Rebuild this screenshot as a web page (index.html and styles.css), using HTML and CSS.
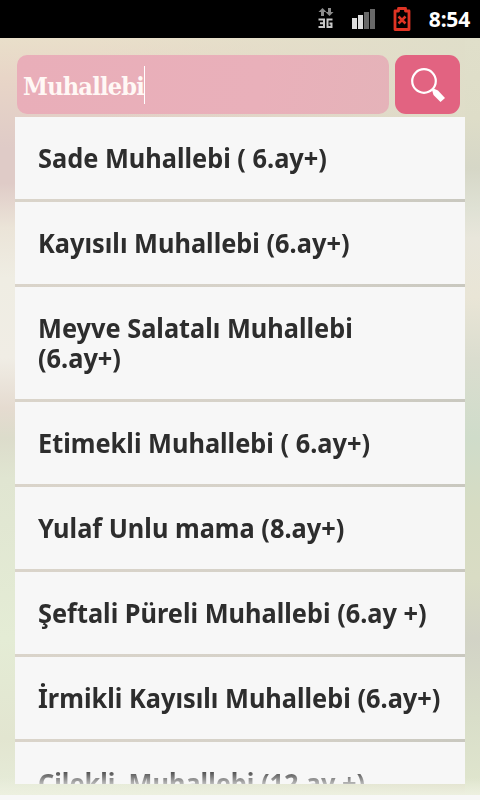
FILE: index.html
```html
<!DOCTYPE html>
<html lang="tr">
<head>
    <meta charset="UTF-8" />
    <title>Muhallebi</title>
    <link rel="stylesheet" href="styles.css">
</head>
<body>

<header class="statusbar">
    <svg class="network" width="16" height="22" viewBox="0 0 16 22">
        <path fill="#8c8c8c" d="M4.500 0l4 4H6v4H3V4H.5zM10 0h3v4h2.500l-4 4-4-4H10z" />
        <path fill="none" stroke="#c8c8c8" stroke-width="2" d="M.5 11.500H6V19H.5M2 15.200h4M14.500 11.500H9.500V19h4v-3.500h-2" />
    </svg>
    <svg class="signal" width="24" height="22" viewBox="0 0 24 22">
        <path fill="#dedede" d="M0 10h5v11H0zM6 7h5v14H6z" />
        <path fill="#686868" d="M12 4h5v17h-5zM18 1h5v20h-5z" />
    </svg>
    <svg class="battery" width="18" height="26" viewBox="0 0 18 26">
        <path fill="none" stroke="#df3424" stroke-width="2.800" stroke-linejoin="round" d="M2 5h3.500V2.500h7V5H16v18.500H2z" />
        <path stroke="#df3424" stroke-width="2.500" d="M5.500 10.500l7 7M12.500 10.500l-7 7" />
    </svg>
    <span class="clock">8:54</span>
</header>

<main class="page">
    <div class="search">
        <div class="search-field"><span class="search-text">Muhallebi</span><span class="caret"></span></div>
        <div class="search-button">
            <svg width="36" height="36" viewBox="0 0 36 36">
                <circle cx="14" cy="14" r="11.800" fill="none" stroke="#fff" stroke-width="2.200" />
                <path fill="#fff" d="M22 23l1.500-1.500L28 23.500l7 7.500-4.500 4-7-7z" />
            </svg>
        </div>
    </div>

    <ul class="recipes">
        <li><span>Sade Muhallebi ( 6.ay+)</span></li>
        <li><span>Kayısılı Muhallebi (6.ay+)</span></li>
        <li><span>Meyve Salatalı Muhallebi<br>(6.ay+)</span></li>
        <li><span>Etimekli Muhallebi ( 6.ay+)</span></li>
        <li><span>Yulaf Unlu mama (8.ay+)</span></li>
        <li><span>Şeftali Püreli Muhallebi (6.ay +)</span></li>
        <li><span>İrmikli Kayısılı Muhallebi (6.ay+)</span></li>
        <li><span>Çilekli&nbsp; Muhallebi (12.ay +)</span></li>
    </ul>
</main>

</body>
</html>
```

FILE: styles.css
```css
body {
    margin: 0;
    width: 480px;
    height: 800px;
    overflow: hidden;
    background: #f8f8f8;
    font-family: "Noto Sans", "Open Sans", sans-serif;
}
.statusbar {
    display: flex;
    align-items: center;
    justify-content: flex-end;
    box-sizing: border-box;
    height: 38px;
    padding-right: 10px;
    background: #000;
}
.network {
    margin-right: 18px;
}
.signal {
    margin-right: 17px;
}
.battery {
    margin-right: 18px;
}
.clock {
    color: #fff;
    font-size: 21px;
    font-weight: 700;
    letter-spacing: -0.200px;
    line-height: 38px;
}
.page {
    box-sizing: border-box;
    height: 757px;
    padding: 17px 15px 0;
    background:
        linear-gradient(to bottom, transparent 740px, #edf0e0 757px),
        linear-gradient(to bottom, #e0dfca, #deddc8 80px, #d6d7c7 130px, #dfe1d4 170px, #e8e6db 200px, #e9e5d6 260px, #dbddcf 320px, #cfdcca 400px, #d6dcc3 470px, #d9dcc4 540px, #d2d3c6 600px, #d9dec9 680px, #e0e6ce) right top / 15px 100% no-repeat,
        linear-gradient(to right, transparent 20%, rgba(223, 222, 201, 0.95) 97%),
        linear-gradient(to bottom, #e9dfca, #e8d5c7 40px, #dfcbc7 110px, #dfcbc7 145px, #ebe4d8 190px, #efede3 240px, #f0ede5 320px, #e5dbd0 370px, #dcdccb 400px, #e0e5d1 440px, #e4ecd5 600px, #e2e5d0 700px, #e6ecd9);
}
.search {
    display: flex;
    gap: 6px;
    height: 59px;
    padding: 0 5px 3px 2px;
}
.search-field {
    display: flex;
    align-items: center;
    box-sizing: border-box;
    width: 372px;
    padding-left: 6px;
    border-radius: 10px;
    background: linear-gradient(100deg, #e9aeb9, #e9b0ba 65%, #e5b3b9);
}
.search-text {
    width: 121px;
    padding-top: 3px;
    color: #fff8f5;
    font-family: "DejaVu Serif Condensed", "DejaVu Serif", serif;
    font-size: 25px;
    font-weight: 700;
    letter-spacing: -0.750px;
    white-space: nowrap;
}
.caret {
    width: 1px;
    height: 38px;
    background: #fff;
}
.search-button {
    display: flex;
    align-items: center;
    justify-content: center;
    width: 65px;
    border-radius: 11px;
    background: #e26381;
}
.recipes {
    display: flex;
    flex-direction: column;
    gap: 3px;
    height: 667px;
    margin: 0;
    padding: 0;
    overflow: hidden;
    list-style: none;
    background: linear-gradient(to right, #dad4ca, #d5d1c8 60%, #c9c8bf);
}
.recipes li {
    flex: none;
    padding: 26px 0 26px 23px;
    background: #f7f7f7;
    color: #2d2d2d;
    font-size: 26.600px;
    font-weight: 700;
    line-height: 30px;
    white-space: nowrap;
}
.recipes span {
    display: block;
    width: max-content;
    transform: scaleX(0.953);
    transform-origin: left;
}
.recipes li:last-child span {
    background: linear-gradient(#2d2d2d, #c4c4c4 17px) text;
    color: transparent;
}
```
